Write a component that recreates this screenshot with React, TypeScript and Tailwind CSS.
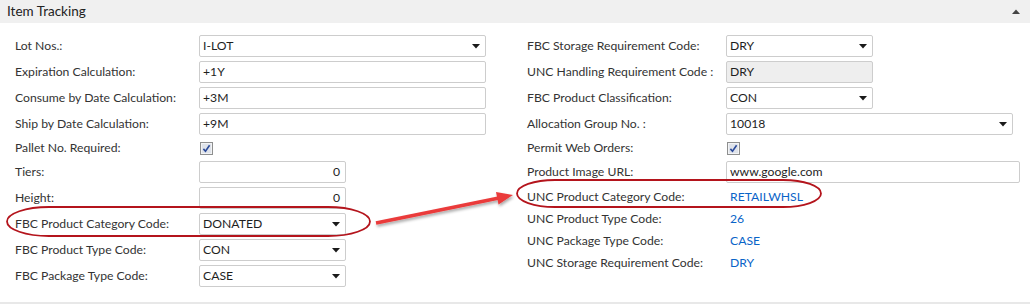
import React from "react";

type Field = {
  label: string;
  kind: "select" | "text" | "number" | "check" | "readonly" | "link";
  value?: string;
  width?: string;
};

const leftFields: Field[] = [
  { label: "Lot Nos.:", kind: "select", value: "I-LOT", width: "w-[287px]" },
  { label: "Expiration Calculation:", kind: "text", value: "+1Y", width: "w-[287px]" },
  { label: "Consume by Date Calculation:", kind: "text", value: "+3M", width: "w-[287px]" },
  { label: "Ship by Date Calculation:", kind: "text", value: "+9M", width: "w-[287px]" },
  { label: "Pallet No. Required:", kind: "check" },
  { label: "Tiers:", kind: "number", value: "0", width: "w-[147px]" },
  { label: "Height:", kind: "number", value: "0", width: "w-[147px]" },
  { label: "FBC Product Category Code:", kind: "select", value: "DONATED", width: "w-[147px]" },
  { label: "FBC Product Type Code:", kind: "select", value: "CON", width: "w-[147px]" },
  { label: "FBC Package Type Code:", kind: "select", value: "CASE", width: "w-[147px]" },
];

const rightFields: Field[] = [
  { label: "FBC Storage Requirement Code:", kind: "select", value: "DRY", width: "w-[147px]" },
  { label: "UNC Handling Requirement Code :", kind: "readonly", value: "DRY", width: "w-[147px]" },
  { label: "FBC Product Classification:", kind: "select", value: "CON", width: "w-[147px]" },
  { label: "Allocation Group No. :", kind: "select", value: "10018", width: "w-[287px]" },
  { label: "Permit Web Orders:", kind: "check" },
  { label: "Product Image URL:", kind: "text", value: "www.google.com", width: "w-[294px]" },
  { label: "UNC Product Category Code:", kind: "link", value: "RETAILWHSL" },
  { label: "UNC Product Type Code:", kind: "link", value: "26" },
  { label: "UNC Package Type Code:", kind: "link", value: "CASE" },
  { label: "UNC Storage Requirement Code:", kind: "link", value: "DRY" },
];

const Checkbox = () => (
  <svg width="13" height="13" viewBox="0 0 13 13" className="ml-px">
    <rect x="0.5" y="0.5" width="12" height="12" fill="#f2f3f5" stroke="#8e8f8f" />
    <rect x="2" y="2" width="9" height="9" fill="#dfe3ea" />
    <path d="M3.4 6.9 L5.5 9.3 L9.6 3.3" fill="none" stroke="#2b4a9a" strokeWidth="1.6" />
  </svg>
);

const DropArrow = () => (
  <svg width="8" height="5" viewBox="0 0 8 5" className="shrink-0">
    <path d="M0 0 H8 L4 4.5 Z" fill="#1a1a1a" />
  </svg>
);

const FieldControl = ({ f }: { f: Field }) => {
  if (f.kind === "check") return <Checkbox />;
  if (f.kind === "link") return <span className="text-[#0a64c8] pl-[4px]">{f.value}</span>;
  const base = `${f.width} h-[22px] border border-[#cdcdcd] rounded-[2px] flex items-center pl-[3px] pr-[5px] text-[#1e1e1e]`;
  if (f.kind === "readonly") return <div className={`${base} bg-[#eeeeee]`}>{f.value}</div>;
  if (f.kind === "number") return <div className={`${base} bg-white justify-end pr-[3px]`}>{f.value}</div>;
  if (f.kind === "select")
    return (
      <div className={`${base} bg-white justify-between`}>
        <span>{f.value}</span>
        <DropArrow />
      </div>
    );
  return <div className={`${base} bg-white`}>{f.value}</div>;
};

const Row = ({ f, labelW }: { f: Field; labelW: string }) => {
  const h = f.kind === "check" || f.kind === "link" ? "h-[22px]" : "h-[26px]";
  return (
    <div className={`flex items-center ${h}`}>
      <div className={`${labelW} shrink-0 text-[#333333]`}>{f.label}</div>
      <FieldControl f={f} />
    </div>
  );
};

export default function App() {
  return (
    <div className="relative w-[1030px] h-[304px] bg-white border-b-2 border-[#e8e8e8] font-[Lato,sans-serif] text-[12.2px] overflow-hidden">
      {/* header */}
      <div className="h-[23px] bg-[#f0f0f0] flex items-center justify-between pl-[7px] pr-[10px]">
        <span className="text-[13.5px] text-[#222222]">Item Tracking</span>
        <svg width="8" height="5" viewBox="0 0 8 5">
          <path d="M0 5 L4 0.5 L8 5 Z" fill="#444444" />
        </svg>
      </div>

      <div className="flex pl-[15px] pt-[10px]">
        <div className="w-[512px] flex flex-col">
          {leftFields.map((f) => (
            <Row key={f.label} f={f} labelW="w-[184px]" />
          ))}
        </div>
        <div className="flex flex-col">
          {rightFields.map((f, i) => (
            <div key={f.label} className={i === 6 ? "mt-px" : ""}>
              <Row f={f} labelW="w-[199px]" />
            </div>
          ))}
        </div>
      </div>

      {/* annotations */}
      <svg className="absolute inset-0 pointer-events-none" width="1030" height="304" viewBox="0 0 1030 304">
        <defs>
          <filter id="sh" x="-10%" y="-50%" width="120%" height="200%">
            <feDropShadow dx="1" dy="2" stdDeviation="1.5" floodColor="#000" floodOpacity="0.35" />
          </filter>
        </defs>
        <rect x="7" y="207" width="363" height="29" rx="42" ry="14.5" fill="none" stroke="#b4141c" strokeWidth="1.8" />
        <rect x="517" y="180" width="304" height="27" rx="38" ry="13.5" fill="none" stroke="#b4141c" strokeWidth="1.8" />
        <g filter="url(#sh)">
          <line x1="376" y1="223" x2="499" y2="198" stroke="#ea3b3b" strokeWidth="3.5" />
          <polygon points="513,195 498.5,204.5 496,192" fill="#ea3b3b" />
        </g>
      </svg>
    </div>
  );
}
